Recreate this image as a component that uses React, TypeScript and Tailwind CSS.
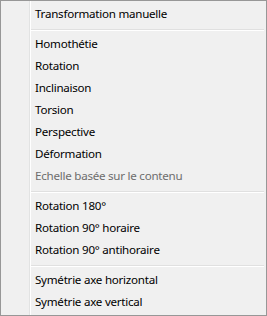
import React from "react";

type Entry = { label: string; disabled?: boolean } | "sep";

const entries: Entry[] = [
  { label: "Transformation manuelle" },
  "sep",
  { label: "Homothétie" },
  { label: "Rotation" },
  { label: "Inclinaison" },
  { label: "Torsion" },
  { label: "Perspective" },
  { label: "Déformation" },
  { label: "Echelle basée sur le contenu", disabled: true },
  "sep",
  { label: "Rotation 180°" },
  { label: "Rotation 90° horaire" },
  { label: "Rotation 90° antihoraire" },
  "sep",
  { label: "Symétrie axe horizontal" },
  { label: "Symétrie axe vertical" },
];

export default function App() {
  return (
    <div
      className="w-[267px] h-[316px] border border-[#979797] bg-[#f0f0f0] flex"
      style={{ fontFamily: '"Segoe UI", "Noto Sans", sans-serif' }}
    >
      <div className="w-[28px]" />
      <div className="w-px bg-[#e2e3e3]" />
      <div className="w-px bg-white" />
      <ul className="flex-1 flex flex-col pt-[2px] pb-[2px] pr-[2px]">
        {entries.map((e, i) =>
          e === "sep" ? (
            <li key={i} className="pt-[4px] pb-[2px]">
              <div className="h-px bg-[#e0e0e0]" />
              <div className="h-px bg-white" />
            </li>
          ) : (
            <li
              key={i}
              className={
                "h-[22px] leading-[22px] pl-[4px] text-[11.6px] tracking-[-0.25px] whitespace-nowrap " +
                (e.disabled ? "text-[#6d6d6d]" : "text-black")
              }
            >
              {e.label}
            </li>
          )
        )}
      </ul>
    </div>
  );
}
